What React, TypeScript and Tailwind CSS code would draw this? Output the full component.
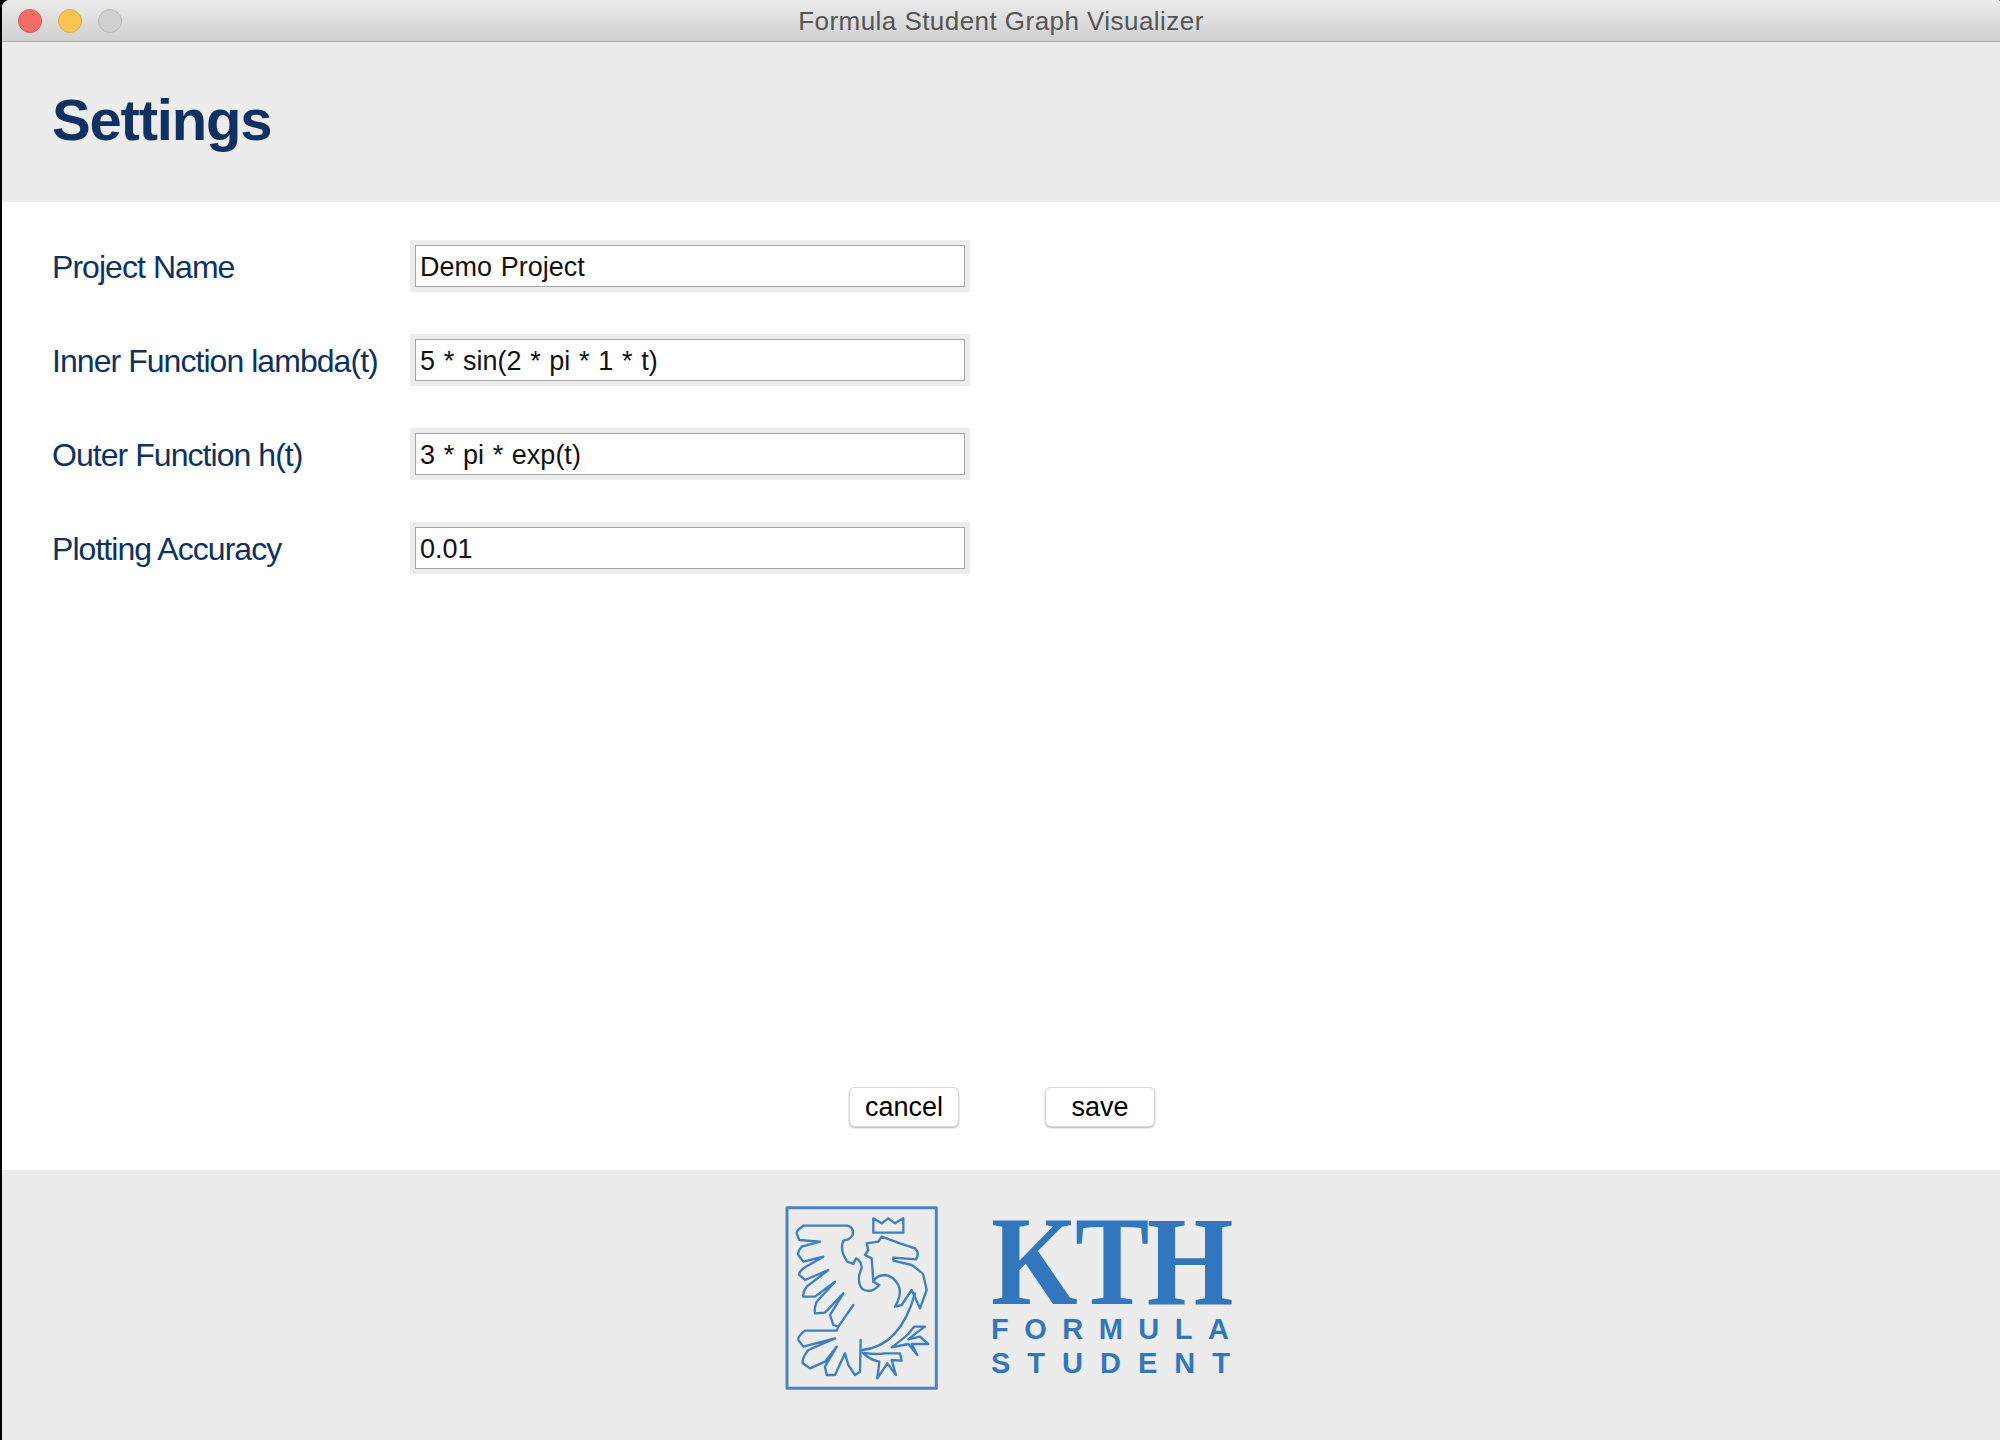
const sans = "font-['Liberation_Sans',Arial,sans-serif]";

function Eagle() {
  return (
    <svg viewBox="0 0 600 630" className="w-[200px] h-[210px] shrink-0" fill="none" stroke="#3d7fc1" strokeWidth="7" strokeLinejoin="round" strokeLinecap="round">
      <rect x="81" y="53" width="448" height="542" strokeWidth="9" stroke="#4a85c3" />
      <path d="M340 85 L365 100 L385 85 L405 100 L430 85 L430 128 L340 128 Z" />
      <path d="M130 107 L262 107 Q282 112 278 135 Q270 150 250 152 Q238 180 262 215 L280 222 L288 205 Q305 212 305 235 Q288 270 305 295 Q330 315 358 285 L340 275" />
      <path d="M130 107 Q108 122 110 130 L118 150 L180 155 L125 170 Q112 185 115 195 L130 215 L190 200 L135 232 Q115 245 118 255 L135 270 L205 240 L140 290 Q128 305 130 320 L165 320 L225 275 L170 335 Q162 355 165 370 L195 368 L250 310 L210 375 L220 405 L235 410 L280 345" />
      <path d="M235 410 L230 422 L135 422 Q112 440 115 450 L130 470 L225 445 L145 480 Q125 505 128 520 L150 535 L195 515 L230 470 L195 530 L200 555 L225 555 L255 490 L265 525 L285 555 L300 545 L302 450" />
      <path d="M305 480 Q420 470 465 310" />
      <path d="M340 275 L335 205 L315 195 L325 180 L320 160 L355 155 L365 140 L420 160 L465 175 Q480 190 468 208 L400 203 L400 212 L455 225 Q490 250 490 255 L500 300 L480 355 L455 300 L425 345 L405 350 Q428 310 415 285 Q400 258 375 255 Q350 255 340 275" />
      <path d="M395 472 Q425 450 445 432 L462 410 L495 410 L470 428 L445 448 L480 440 L505 462 L455 462 L472 495 L445 462 L395 472" />
      <path d="M308 488 Q345 495 375 490 L420 490 L425 512 L395 510 L408 555 L382 520 L352 565 L358 515 Q330 510 308 488" />
    </svg>
  );
}

function Row({ label, value }: { label: string; value: string }) {
  return (
    <div className="flex items-center h-[52px]">
      <div className="w-[358px] pt-[1px] text-[32px] tracking-[-0.95px] text-[#0f3161]">{label}</div>
      <div className="w-[560px] h-[52px] bg-[#ececec] p-[5px]">
        <div className="h-[42px] bg-white border border-[#a6a6a6] pl-[4px] pt-[2px] flex items-center text-[27px] text-[#111] [word-spacing:1.2px]">
          {value}
        </div>
      </div>
    </div>
  );
}

function Btn({ children }: { children: string }) {
  return (
    <button className="w-[110px] h-[40px] bg-white rounded-[6px] border border-[#d8d8d8] shadow-[0_1px_2px_rgba(0,0,0,0.3)] text-[27px] text-black leading-none">
      {children}
    </button>
  );
}

export default function App() {
  return (
    <div className={`${sans} w-[2000px] h-[1440px] bg-black pl-[2px] overflow-hidden`}>
      <div className="h-full flex flex-col rounded-tl-[8px] rounded-tr-[2px] overflow-hidden bg-white">
        <div className="h-[42px] shrink-0 flex items-center relative border-b border-[#b0b0b0] bg-gradient-to-b from-[#ebebeb] to-[#d0d0d0] pl-[16px] gap-[16px]">
          <span className="w-[24px] h-[24px] rounded-full bg-[#f26d64] border border-[#de5a50]" />
          <span className="w-[24px] h-[24px] rounded-full bg-[#fac450] border border-[#e2a93c]" />
          <span className="w-[24px] h-[24px] rounded-full bg-[#d0d0d0] border border-[#b8b8b8]" />
          <div className="absolute inset-0 pt-[1px] flex items-center justify-center text-[26px] text-[#555] tracking-[0.45px]">
            Formula Student Graph Visualizer
          </div>
        </div>
        <div className="h-[160px] shrink-0 bg-[#ececec] flex items-center pl-[50px] pb-[5px]">
          <h1 className="text-[58px] font-bold tracking-[-1.2px] text-[#0f3161]">Settings</h1>
        </div>
        <div className="flex-1 flex flex-col pl-[50px] pt-[38px] relative">
          <div className="flex flex-col gap-[42px]">
            <Row label="Project Name" value="Demo Project" />
            <Row label="Inner Function lambda(t)" value="5 * sin(2 * pi * 1 * t)" />
            <Row label="Outer Function h(t)" value="3 * pi * exp(t)" />
            <Row label="Plotting Accuracy" value="0.01" />
          </div>
          <div className="mt-auto mb-[43px] ml-[797px] flex gap-[86px]">
            <Btn>cancel</Btn>
            <Btn>save</Btn>
          </div>
        </div>
        <div className="h-[270px] shrink-0 bg-[#ececec] flex pt-[20px] pl-[758px]">
          <Eagle />
          <div className="ml-[31px] flex flex-col text-[#3277bd] pt-[30px]">
            <div className="font-['Liberation_Serif',serif] font-bold text-[126px] leading-[84px] tracking-[-3px] scale-x-[0.885] origin-left">KTH</div>
            <div className="mt-[10px] text-[29px] font-bold leading-[30px] tracking-[15.5px]">FORMULA</div>
            <div className="mt-[4px] text-[29px] font-bold leading-[30px] tracking-[17px]">STUDENT</div>
          </div>
        </div>
      </div>
    </div>
  );
}
